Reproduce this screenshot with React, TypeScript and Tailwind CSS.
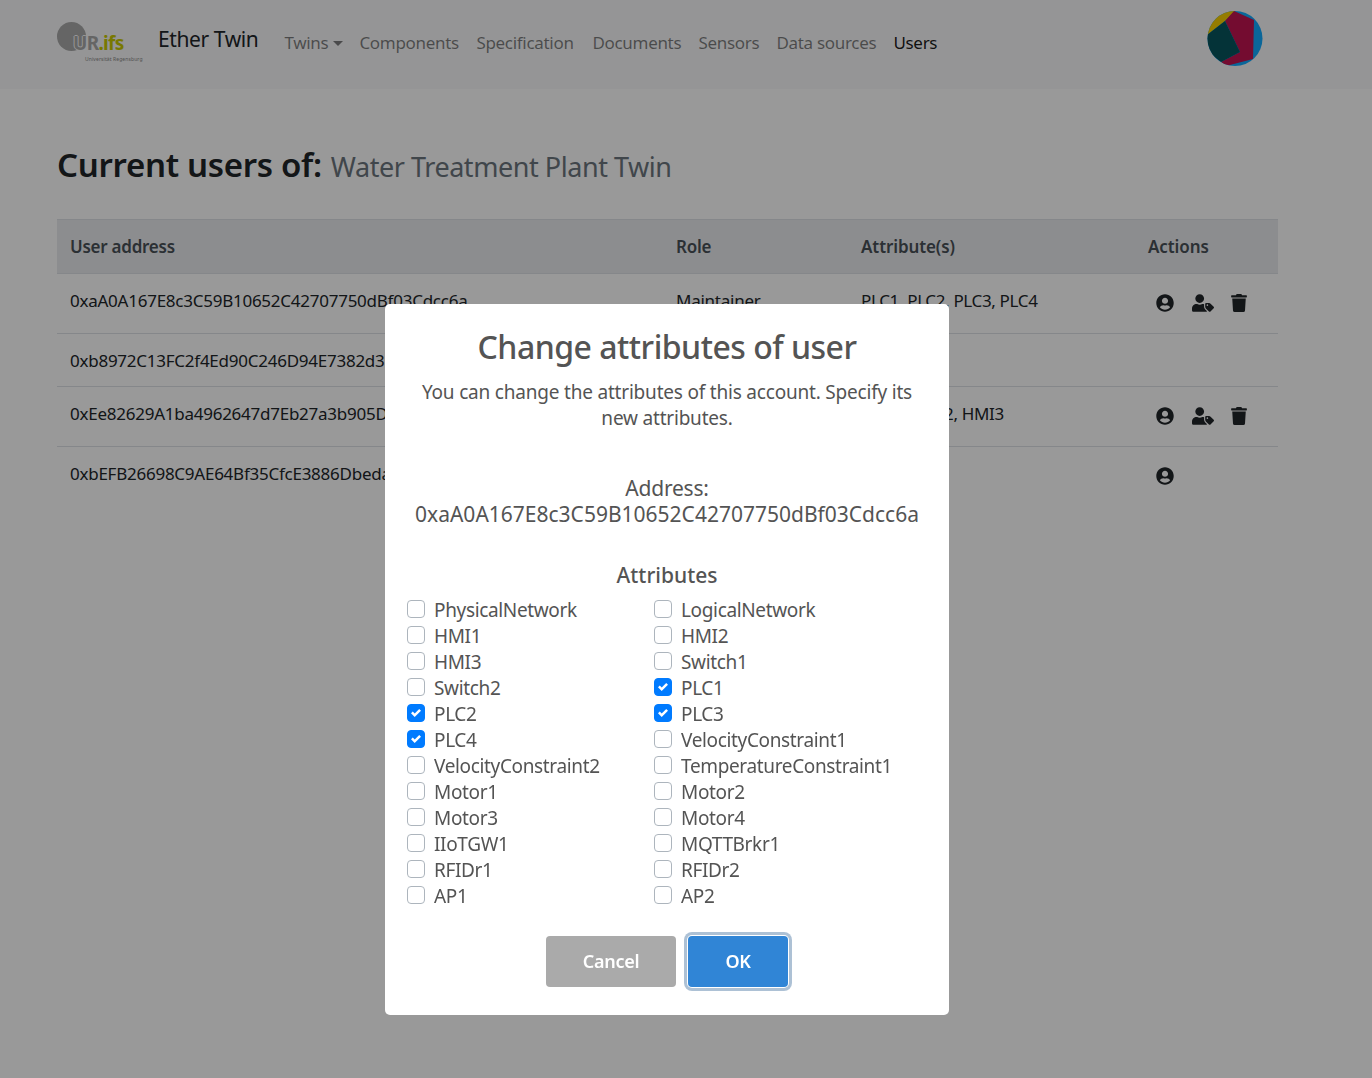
import React from 'react';
import { FaUserCircle, FaUserTag, FaTrash } from 'react-icons/fa';

const font = "font-['Noto_Sans','Open_Sans',sans-serif]";

const navLinks = [
  { label: 'Components', w: 'w-[117px]' },
  { label: 'Specification', w: 'w-[116px]' },
  { label: 'Documents', w: 'w-[106px]' },
  { label: 'Sensors', w: 'w-[78px]' },
  { label: 'Data sources', w: 'w-[117px]' },
];

const users = [
  { address: '0xaA0A167E8c3C59B10652C42707750dBf03Cdcc6a', role: 'Maintainer', attrs: 'PLC1, PLC2, PLC3, PLC4', icons: 3, h: 'h-[60px] border-b' },
  { address: '0xb8972C13FC2f4Ed90C246D94E7382d3', role: '', attrs: '', icons: 0, h: 'h-[53px] border-b' },
  { address: '0xEe82629A1ba4962647d7Eb27a3b905D', role: '', attrs: 'HMI1, HMI2, HMI3', icons: 3, h: 'h-[60px] border-b' },
  { address: '0xbEFB26698C9AE64Bf35CfcE3886Dbeda', role: '', attrs: '', icons: 1, h: 'h-[60px]' },
];

const attributes = [
  ['PhysicalNetwork', false], ['LogicalNetwork', false],
  ['HMI1', false], ['HMI2', false],
  ['HMI3', false], ['Switch1', false],
  ['Switch2', false], ['PLC1', true],
  ['PLC2', true], ['PLC3', true],
  ['PLC4', true], ['VelocityConstraint1', false],
  ['VelocityConstraint2', false], ['TemperatureConstraint1', false],
  ['Motor1', false], ['Motor2', false],
  ['Motor3', false], ['Motor4', false],
  ['IIoTGW1', false], ['MQTTBrkr1', false],
  ['RFIDr1', false], ['RFIDr2', false],
  ['AP1', false], ['AP2', false],
] as const;

function Logo() {
  return (
    <div className="relative h-[44px] w-[88px]">
      <div className="absolute left-0 top-0 h-[29px] w-[29px] rounded-full bg-[#a8a8a8]" />
      <span className="absolute left-[16px] top-[9px] text-[19px] font-bold leading-[24px] tracking-[-0.7px] text-[#a8a8a8]">
        <span className="[text-shadow:-1px_0_0_#f8f9fa,1px_0_0_#f8f9fa,0_1px_0_#f8f9fa,0_-1px_0_#f8f9fa]">U</span>R<span className="text-[#c8c800]">.ifs</span>
      </span>
      <span className="absolute left-[28px] top-[34px] whitespace-nowrap text-[5px] leading-[6px] tracking-[0.1px] text-[#888]">Universität Regensburg</span>
    </div>
  );
}

function Avatar() {
  return (
    <svg width="56" height="56" viewBox="0 0 56 56" className="block">
      <defs>
        <clipPath id="avatar-clip"><circle cx="28" cy="27.5" r="27.5" /></clipPath>
      </defs>
      <g clipPath="url(#avatar-clip)">
        <rect width="56" height="56" fill="#11aaff" />
        <polygon points="0,0 28,0 18,10 0,24" fill="#f9cf00" />
        <polygon points="27,0 47,9 46,48 19,55 14,51 33,41 18,10" fill="#c11450" />
        <polygon points="18,10 33,41 14,51 0,40 0,24" fill="#07555e" />
      </g>
    </svg>
  );
}

function RowIcons({ count }: { count: number }) {
  return (
    <div className="flex h-[20px] items-center text-[18px] text-[#212529]">
      {count > 0 && <span className="ml-[8px] w-[36px]"><FaUserCircle /></span>}
      {count > 1 && <span className="w-[37px] text-[22px]"><FaUserTag /></span>}
      {count > 2 && <span className="pl-[1px]"><FaTrash /></span>}
    </div>
  );
}

function Checkbox({ label, checked }: { label: string; checked: boolean }) {
  return (
    <div className="flex h-[26px] items-center">
      <span className={`mb-[2px] flex h-[18px] w-[18px] shrink-0 items-center justify-center rounded-[4px] border ${checked ? 'border-[#007bff] bg-[#007bff]' : 'border-[#adb5bd] bg-white'}`}>
        {checked && (
          <svg width="10" height="10" viewBox="0 0 8 8">
            <path fill="#fff" d="M6.564.75l-3.59 3.612-1.538-1.55L0 4.26l2.974 2.99L8 2.193z" />
          </svg>
        )}
      </span>
      <span className="ml-[9px] whitespace-nowrap text-[19px] tracking-[-0.35px]">{label}</span>
    </div>
  );
}

export default function App() {
  return (
    <div className={`${font} relative min-h-[1078px] bg-white text-[#212529]`}>
      <nav className="flex h-[89px] items-start bg-[#f8f9fa] pl-[57px] pr-[109px]">
        <div className="mt-[22px]"><Logo /></div>
        <span className="ml-[13px] mt-[23px] text-[21px] leading-[32px] tracking-[-0.4px]">Ether Twin</span>
        <div className="ml-[26px] mt-[30px] flex text-[17px] leading-[26px] tracking-[-0.3px] text-[#00000080]">
          <span className="flex w-[75px] items-center">
            Twins
            <span className="ml-[5px] h-0 w-0 border-x-[5px] border-t-[5px] border-x-transparent border-t-[#00000080]" />
          </span>
          {navLinks.map(link => (
            <span key={link.label} className={link.w}>{link.label}</span>
          ))}
          <span className="text-[#000000e6]">Users</span>
        </div>
        <div className="ml-auto mt-[11px]"><Avatar /></div>
      </nav>

      <main className="px-[57px] pr-[94px]">
        <h2 className="mt-[52px] flex h-[47px] items-baseline text-[33px] font-semibold leading-[47px] tracking-[-0.3px]">
          Current users of:
          <small className="ml-[9px] text-[27px] font-normal tracking-[-0.45px] text-[#6c757d]">Water Treatment Plant Twin</small>
        </h2>
        <table className="mt-[31px] w-full table-fixed border-collapse text-[17px] tracking-[-0.25px]">
          <thead>
            <tr className="h-[54px] border-y border-[#dee2e6] bg-[#e9ecef] text-left text-[#495057]">
              <th className="w-[606px] pl-[13px] font-semibold">User address</th>
              <th className="w-[185px] pl-[13px] font-semibold">Role</th>
              <th className="w-[287px] pl-[13px] font-semibold tracking-[-0.1px]">Attribute(s)</th>
              <th className="pl-[13px] font-semibold tracking-[-0.1px]">Actions</th>
            </tr>
          </thead>
          <tbody>
            {users.map(user => (
              <tr key={user.address} className={`${user.h} border-[#dee2e6] align-top`}>
                <td className="whitespace-nowrap pl-[13px] pt-[14px]">{user.address}</td>
                <td className="pl-[13px] pt-[14px]">{user.role}</td>
                <td className="pl-[13px] pt-[14px] tracking-[-0.35px]">{user.attrs}</td>
                <td className="pl-[13px] pt-[19px]"><RowIcons count={user.icons} /></td>
              </tr>
            ))}
          </tbody>
        </table>
      </main>

      {/* modal overlay */}
      <div className="fixed inset-0 bg-black/40">
        <div className="ml-[385px] mt-[304px] h-[711px] w-[564px] rounded-[5px] bg-white text-center text-[#545454]">
          <h2 className="pt-[20px] text-[32px] font-medium leading-[46px] tracking-[-0.5px]">Change attributes of user</h2>
          <p className="mx-auto mt-[9px] w-[510px] text-[19px] leading-[26px] tracking-[-0.2px]">
            You can change the attributes of this account. Specify its new attributes.
          </p>
          <div className="mt-[44px] text-[21px] leading-[26px]">
            <div className="tracking-[-0.2px]">Address:</div>
            <div>0xaA0A167E8c3C59B10652C42707750dBf03Cdcc6a</div>
          </div>
          <div className="mt-[35px] text-[21px] font-medium leading-[26px]">Attributes</div>
          <div className="ml-[22px] mt-[9px] grid grid-cols-[247px_1fr] text-left">
            {attributes.map(([label, checked]) => (
              <Checkbox key={label} label={label} checked={checked} />
            ))}
          </div>
          <div className="mt-[27px] flex justify-center gap-[12px] text-[18px] font-semibold tracking-[-0.3px] text-white">
            <button className="h-[51px] w-[130px] rounded-[4px] bg-[#aaaaaa]">Cancel</button>
            <button className="h-[51px] w-[100px] rounded-[4px] bg-[#3085d6] shadow-[0_0_0_1px_#fff,0_0_0_4px_rgba(50,100,150,0.4)]">OK</button>
          </div>
        </div>
      </div>
    </div>
  );
}
